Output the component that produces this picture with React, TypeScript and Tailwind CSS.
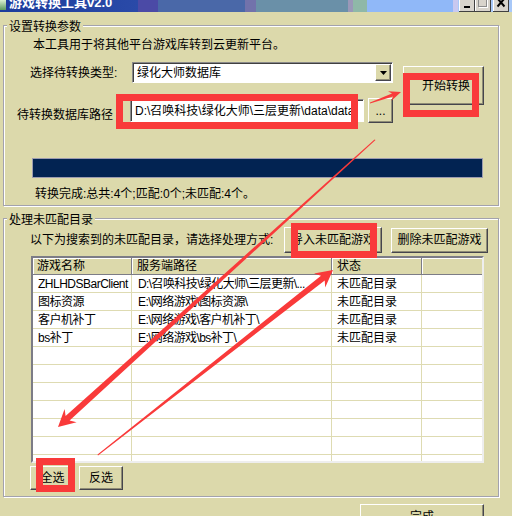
import React from "react";

const raised =
  "flex items-center justify-center bg-[#dcd9ab] border border-t-white border-l-white border-r-[#45454d] border-b-[#45454d] shadow-[inset_-1px_-1px_0_#8f8d76] text-[12px] leading-[14px] text-black";
const sunken =
  "border border-t-[#8a8a8a] border-l-[#8a8a8a] border-r-white border-b-white shadow-[inset_1px_1px_0_#404040]";
const etched = "border border-[#a3a2ad] shadow-[inset_1px_1px_0_#fff,1px_1px_0_#fff]";

const rows = [
  ["ZHLHDSBarClient", "D:\\召唤科技\\绿化大师\\三层更新\\...", "未匹配目录"],
  ["图标资源", "E:\\网络游戏\\图标资源\\", "未匹配目录"],
  ["客户机补丁", "E:\\网络游戏\\客户机补丁\\", "未匹配目录"],
  ["bs补丁", "E:\\网络游戏\\bs补丁\\", "未匹配目录"],
  ["", "", ""],
  ["", "", ""],
  ["", "", ""],
  ["", "", ""],
  ["", "", ""],
  ["", "", ""],
  ["", "", ""],
];

function TitleBar() {
  return (
    <div className="h-[12px] flex items-start overflow-hidden bg-[linear-gradient(90deg,#1c3c9c_0px,#2a4aa8_138px,#4b4aa6_138px,#4b4aa6_158px,#4a68a8_158px,#4a68a8_245px,#7272ab_245px,#7272ab_256px,#6a90a8_256px,#6a90a8_348px,#9a98b8_348px,#9a98b8_353px,#8fb8a8_353px,#8fb8a8_367px,#90b8f8_367px,#90b8f8_453px,#c8c8f0_453px,#c8c8f0_458px,#a8c8f8_458px)]">
      <span className="w-[6px] h-[10px] bg-[linear-gradient(180deg,#d8f0d0,#5a9a60)]" />
      <span className="ml-[3px] -mt-[4px] text-white font-bold text-[13px] leading-[13px]">游戏转换工具v2.0</span>
      <div className="ml-auto mr-[3px] flex items-end h-[12px]">
        <div className="w-[16px] h-[14px] -mt-[2px] bg-[#d8d4cc] border-b border-r border-[#404040] shadow-[inset_1px_1px_0_#fff] flex items-end justify-center pb-[3px]">
          <div className="w-[6px] h-[2px] bg-black" />
        </div>
        <div className="w-[16px] h-[14px] -mt-[2px] bg-[#d8d4cc] border-b border-r border-[#404040] shadow-[inset_1px_1px_0_#fff] flex justify-center">
          <div className="w-[9px] h-[9px] border border-[#8c8c8c] border-t-2 shadow-[1px_1px_0_#fff]" />
        </div>
        <div className="ml-[2px] w-[16px] h-[14px] -mt-[2px] bg-[#d8d4cc] border-b border-r border-[#404040] shadow-[inset_1px_1px_0_#fff] flex justify-center">
          <svg width="10" height="10" viewBox="0 0 10 10">
            <path d="M1.5 0.5 L8.5 8.5 M8.5 0.5 L1.5 8.5" stroke="#000" strokeWidth="2" />
          </svg>
        </div>
      </div>
    </div>
  );
}

export default function App() {
  return (
    <div className="relative w-[512px] h-[516px] overflow-hidden bg-[#dcd9ab] text-black text-[12px] leading-[14px] font-['Liberation_Sans','Noto_Sans_CJK_SC',sans-serif]">
      <TitleBar />

      {/* 设置转换参数 */}
      <fieldset className={`ml-[3px] mt-[4px] w-[496px] pb-[4px] ${etched}`}>
        <legend className="ml-[3px] px-[2px] pt-[4px] bg-[#dcd9ab]">设置转换参数</legend>
        <div className="mt-[4px] pl-[29px] h-[14px]">本工具用于将其他平台游戏库转到云更新平台。</div>
        <div className="flex">
          <div className="flex flex-col">
            <div className="mt-[10px] h-[21px] flex items-center pl-[26px]">
              <span className="w-[102px]">选择待转换类型:</span>
              <div className={`w-[261px] h-[21px] bg-white flex items-center ${sunken}`}>
                <span className="pl-[4px] flex-1">绿化大师数据库</span>
                <div className={`w-[16px] h-[17px] mr-[1px] ${raised}`}>
                  <svg width="7" height="4" viewBox="0 0 7 4">
                    <path d="M0 0 H7 L3.5 4 Z" fill="#000" />
                  </svg>
                </div>
              </div>
            </div>
            <div className="mt-[14px] h-[27px] flex items-start pl-[13px]">
              <span className="w-[113px] mt-[11px]">待转换数据库路径</span>
              <div className={`mt-[2px] w-[234px] h-[23px] bg-white flex items-center overflow-hidden whitespace-nowrap ${sunken}`}>
                <span className="pl-[4px]">D:\召唤科技\绿化大师\三层更新\data\data</span>
              </div>
              <div className={`ml-[4px] mt-[1px] w-[25px] h-[25px] ${raised}`}>...</div>
            </div>
          </div>
          <div className={`ml-[10px] mt-[14px] w-[81px] h-[39px] ${raised}`}>
            <span className="pl-[5px]">开始转换</span>
          </div>
        </div>
        <div className="mt-[34px] ml-[28px] w-[451px] h-[20px] border border-[#9c9cb0] bg-[#022352]" />
        <div className="mt-[9px] pl-[31px] h-[14px]">转换完成:总共:4个;匹配:0个;未匹配:4个。</div>
      </fieldset>

      {/* 处理未匹配目录 */}
      <fieldset className={`ml-[3px] mt-[3px] w-[496px] pb-[6px] ${etched}`}>
        <legend className="ml-[3px] px-[2px] pt-[4px] bg-[#dcd9ab]">处理未匹配目录</legend>
        <div className="h-[26px] flex items-center pl-[26px]">
          <span className="w-[254px] whitespace-nowrap">以下为搜索到的未匹配目录，请选择处理方式:</span>
          <div className={`w-[98px] h-[26px] ${raised}`}>导入未匹配游戏</div>
          <div className={`ml-[9px] w-[97px] h-[25px] ${raised}`}>删除未匹配游戏</div>
        </div>

        <div className="ml-[27px] mt-[3px] w-[453px] h-[207px] overflow-hidden bg-white border-2 border-t-[#7c7c86] border-l-[#7c7c86] border-r-[#eeeeee] border-b-[#eeeeee]">
          <div className="flex h-[17px] bg-[#dcd9ab]">
            <div className="w-[99px] pl-[4px] flex items-center border-r border-b border-[#7c7c86] shadow-[inset_1px_1px_0_#fff]">游戏名称</div>
            <div className="w-[200px] pl-[5px] flex items-center border-r border-b border-[#7c7c86] shadow-[inset_1px_1px_0_#fff]">服务端路径</div>
            <div className="w-[90px] pl-[5px] flex items-center border-r border-b border-[#7c7c86] shadow-[inset_1px_1px_0_#fff]">状态</div>
            <div className="flex-1 border-b border-[#7c7c86] shadow-[inset_1px_1px_0_#fff]" />
          </div>
          {rows.map((r, i) => (
            <div key={i} className="flex h-[18px] border-b border-[#dedbb2]">
              <div className="w-[99px] pl-[5px] flex items-center border-r border-[#dedbb2] whitespace-nowrap overflow-hidden tracking-[-0.5px]">{r[0]}</div>
              <div className="w-[200px] pl-[6px] flex items-center border-r border-[#dedbb2] whitespace-nowrap overflow-hidden tracking-[-0.6px]">{r[1]}</div>
              <div className="w-[90px] pl-[5px] flex items-center border-r border-[#dedbb2]">{r[2]}</div>
              <div className="flex-1" />
            </div>
          ))}
        </div>

        <div className="mt-[3px] ml-[26px] flex">
          <div className={`w-[45px] h-[24px] ${raised}`}>全选</div>
          <div className={`ml-[4px] w-[44px] h-[24px] ${raised}`}>反选</div>
        </div>
      </fieldset>

      <div className={`mt-[7px] ml-[360px] w-[124px] h-[26px] ${raised}`}>完成</div>

      {/* red annotations */}
      <svg className="absolute left-0 top-0 pointer-events-none" width="512" height="516" viewBox="0 0 512 516">
        <g fill="none" stroke="#f93a3a" strokeWidth="7">
          <rect x="119.5" y="97.5" width="235" height="28" />
          <rect x="406.5" y="76.5" width="69" height="37" />
          <rect x="294.5" y="226.5" width="79" height="28" />
          <rect x="39.5" y="461.5" width="32" height="27" />
        </g>
        <g fill="#f93a3a">
          <polygon points="370,103.5 393,96.4 391.4,100.7 401,92 388,91.3 392,93.6 370,102.5" />
          <polygon points="375.5,140 69.6,420.5 76.6,422.3 58,427 64.6,408.9 65.6,416.1 374.5,139.5" />
          <polygon points="98,455.5 324.7,280.4 325.2,287.6 333,270 314,273.4 321,275.7 97.5,454.5" />
        </g>
      </svg>
    </div>
  );
}
